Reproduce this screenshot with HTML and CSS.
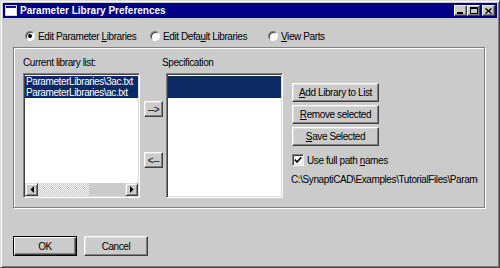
FILE: index.html
```html
<!DOCTYPE html>
<html lang="en">
<head>
    <meta charset="UTF-8">
    <title>Parameter Library Preferences</title>
    <link rel="stylesheet" href="styles.css">
</head>
<body>
<div class="window">
    <div class="titlebar">
        <svg class="appicon" width="12" height="11" viewBox="0 0 12 11">
            <rect x="0.5" y="0.5" width="11" height="10" fill="#fff" stroke="#d8d8d8"/>
            <rect x="1" y="1" width="10" height="2" fill="#1010a0"/>
        </svg>
        <span class="title">Parameter Library Preferences</span>
        <div class="controls">
            <span class="ctl">
                <svg width="7" height="7" viewBox="0 0 7 7"><rect x="0" y="5" width="6" height="2" fill="#000"/></svg>
            </span>
            <span class="ctl">
                <svg width="8" height="7" viewBox="0 0 8 7"><rect x="0.5" y="0.5" width="7" height="6" fill="none" stroke="#000"/><rect x="0" y="0" width="8" height="2" fill="#000"/></svg>
            </span>
            <span class="ctl close">
                <svg width="7" height="6" viewBox="0 0 7 6"><path d="M0.5 0.5 L6.5 5.5 M6.5 0.5 L0.5 5.5" stroke="#000" stroke-width="1.4"/></svg>
            </span>
        </div>
    </div>

    <div class="client">
        <div class="modes">
            <label class="radio"><span class="dot on"></span><span>Edit Parameter <u>L</u>ibraries</span></label>
            <label class="radio"><span class="dot"></span><span>Edit Defa<u>u</u>lt Libraries</span></label>
            <label class="radio"><span class="dot"></span><span><u>V</u>iew Parts</span></label>
        </div>

        <div class="group">
            <div class="col">
                <div class="caption">Current library list:</div>
                <div class="listbox">
                    <div class="items">
                        <div class="item sel">ParameterLibraries\3ac.txt</div>
                        <div class="item sel">ParameterLibraries\ac.txt</div>
                    </div>
                    <div class="hscroll">
                        <span class="sbtn"><svg width="4" height="7" viewBox="0 0 4 7"><path d="M4 0 L0.5 3.5 L4 7 Z" fill="#000"/></svg></span>
                        <span class="track"></span>
                        <span class="thumb"></span>
                        <span class="sbtn"><svg width="4" height="7" viewBox="0 0 4 7"><path d="M0 0 L3.5 3.5 L0 7 Z" fill="#000"/></svg></span>
                    </div>
                </div>
            </div>

            <div class="col arrows">
                <button class="btn move">--&gt;</button>
                <button class="btn move back">&lt;--</button>
            </div>

            <div class="col spec">
                <div class="caption">Specification</div>
                <div class="listbox">
                    <div class="items">
                        <div class="item sel blank"></div>
                    </div>
                </div>
            </div>

            <div class="col actions">
                <button class="btn act"><u>A</u>dd Library to List</button>
                <button class="btn act"><u>R</u>emove selected</button>
                <button class="btn act"><u>S</u>ave Selected</button>
                <label class="check">
                    <span class="box"><svg width="8" height="8" viewBox="0 0 8 8"><path d="M0.8 3.6 L3 6 L7.3 1.4" fill="none" stroke="#000" stroke-width="1.7"/></svg></span>
                    <span>Use full path <u>n</u>ames</span>
                </label>
                <div class="path">C:\SynaptiCAD\Examples\TutorialFiles\Parame</div>
            </div>
        </div>

        <div class="footer">
            <button class="btn dlg default">OK</button>
            <button class="btn dlg">Cancel</button>
        </div>
    </div>
</div>
</body>
</html>
```

FILE: styles.css
```css
html, body {
    margin: 0; padding: 0;
    background: #cbcbcb;
}
body {
    font-family: "Liberation Sans", Arial, sans-serif;
    font-size: 10px;
    letter-spacing: -0.4px;
    color: #000;
}
.window {
    width: 500px; height: 268px;
    box-sizing: border-box;
    border: 1px solid;
    border-color: #dcdcdc #404040 #404040 #dcdcdc;
    box-shadow: inset 1px 1px #fff, inset -1px -1px #808080;
    padding: 2px;
    overflow: hidden;
}
.titlebar {
    height: 15px;
    background: #000088;
    color: #fff;
    display: flex;
    align-items: center;
}
.appicon { margin: 0 3px 0 2px; }
.title { flex: 1; font-weight: bold; letter-spacing: 0; }
.controls { display: flex; margin-right: 2px; }
.ctl {
    width: 13px; height: 11px;
    box-sizing: border-box;
    background: #cbcbcb;
    border: 1px solid;
    border-color: #fff #404040 #404040 #fff;
    box-shadow: inset -1px -1px #808080;
    display: flex; align-items: center; justify-content: center;
}
.ctl svg { display: block; }
.ctl.close { margin-left: 2px; }

/* mode radios */
.modes {
    display: grid;
    grid-template-columns: 125px 118px auto;
    height: 14px;
    margin-top: 11px;
    padding-left: 22px;
    align-items: center;
}
.radio { display: flex; align-items: center; }
.dot {
    width: 10px; height: 10px;
    box-sizing: border-box;
    border-radius: 50%;
    border: 1px solid;
    border-color: #808080 #fff #fff #808080;
    box-shadow: inset 1px 1px #404040;
    background: #fff;
    margin-right: 3px;
    display: flex; align-items: center; justify-content: center;
}
.dot.on::after {
    content: '';
    width: 4px; height: 4px;
    border-radius: 50%;
    background: #000;
}
u { text-decoration: underline; }

/* group box */
.group {
    width: 472px; height: 161px;
    box-sizing: border-box;
    margin: 4px 0 0 10px;
    border: 1px solid #808080;
    box-shadow: inset 1px 1px #fff, 1px 1px #fff;
    padding: 8px 0 0 9px;
    display: flex;
    align-items: flex-start;
}
.col { display: flex; flex-direction: column; }
.caption { line-height: 13px; margin-bottom: 4px; }
.listbox {
    width: 117px; height: 125px;
    box-sizing: border-box;
    border: 1px solid;
    border-color: #808080 #fff #fff #808080;
    box-shadow: inset 1px 1px #404040, inset -1px -1px #dcdcdc;
    background: #fff;
    padding: 1px;
    display: flex; flex-direction: column;
}
.items { padding-top: 1px; }
.item { line-height: 11px; height: 11px; white-space: nowrap; overflow: hidden; padding-left: 1px; }
.item.sel { background: #0b2a63; color: #fff; }
.item.blank { height: 22px; }
.hscroll {
    margin-top: auto;
    height: 13px;
    display: flex;
}
.sbtn {
    width: 13px; height: 13px;
    box-sizing: border-box;
    background: #cbcbcb;
    border: 1px solid;
    border-color: #dcdcdc #404040 #404040 #dcdcdc;
    box-shadow: inset 1px 1px #fff, inset -1px -1px #808080;
    display: flex; align-items: center; justify-content: center;
}
.track {
    width: 51px;
    background: repeating-conic-gradient(#f4f4f4 0 25%, #cbcbcb 0 50%) 0 0 / 2px 2px;
}
.thumb { flex: 1; background: #cbcbcb; }

/* buttons */
.btn {
    font: inherit;
    letter-spacing: inherit;
    color: #000;
    background: #cbcbcb;
    padding: 0;
    box-sizing: border-box;
    border: 1px solid;
    border-color: #fff #404040 #404040 #fff;
    box-shadow: inset -1px -1px #808080, inset 1px 1px #dcdcdc;
}
.arrows { margin-left: 4px; padding-top: 45px; }
.move { width: 19px; height: 16px; }
.move.back { margin-top: 35px; }
.spec { margin-left: 3px; }
.spec .caption { margin-left: -4px; }

.actions { margin-left: 9px; padding-top: 27px; }
.act { width: 87px; height: 19px; margin-bottom: 3px; }
.check {
    display: flex; align-items: center;
    height: 12px;
    margin-top: 5px;
}
.box {
    width: 12px; height: 12px;
    box-sizing: border-box;
    border: 1px solid;
    border-color: #808080 #fff #fff #808080;
    box-shadow: inset 1px 1px #404040, inset -1px -1px #dcdcdc;
    background: #fff;
    margin-right: 3px;
    display: flex; align-items: center; justify-content: center;
}
.path {
    width: 187px;
    margin: 7px 0 0 -1px;
    line-height: 13px;
    white-space: nowrap;
    overflow: hidden;
}

.footer {
    display: flex;
    gap: 7px;
    margin-top: 28px;
    padding-left: 10px;
}
.dlg { width: 64px; height: 20px; }
.dlg.default {
    border: 1px solid #000;
    box-shadow: inset 1px 1px #fff, inset -1px -1px #404040, inset -2px -2px #808080;
}
```
